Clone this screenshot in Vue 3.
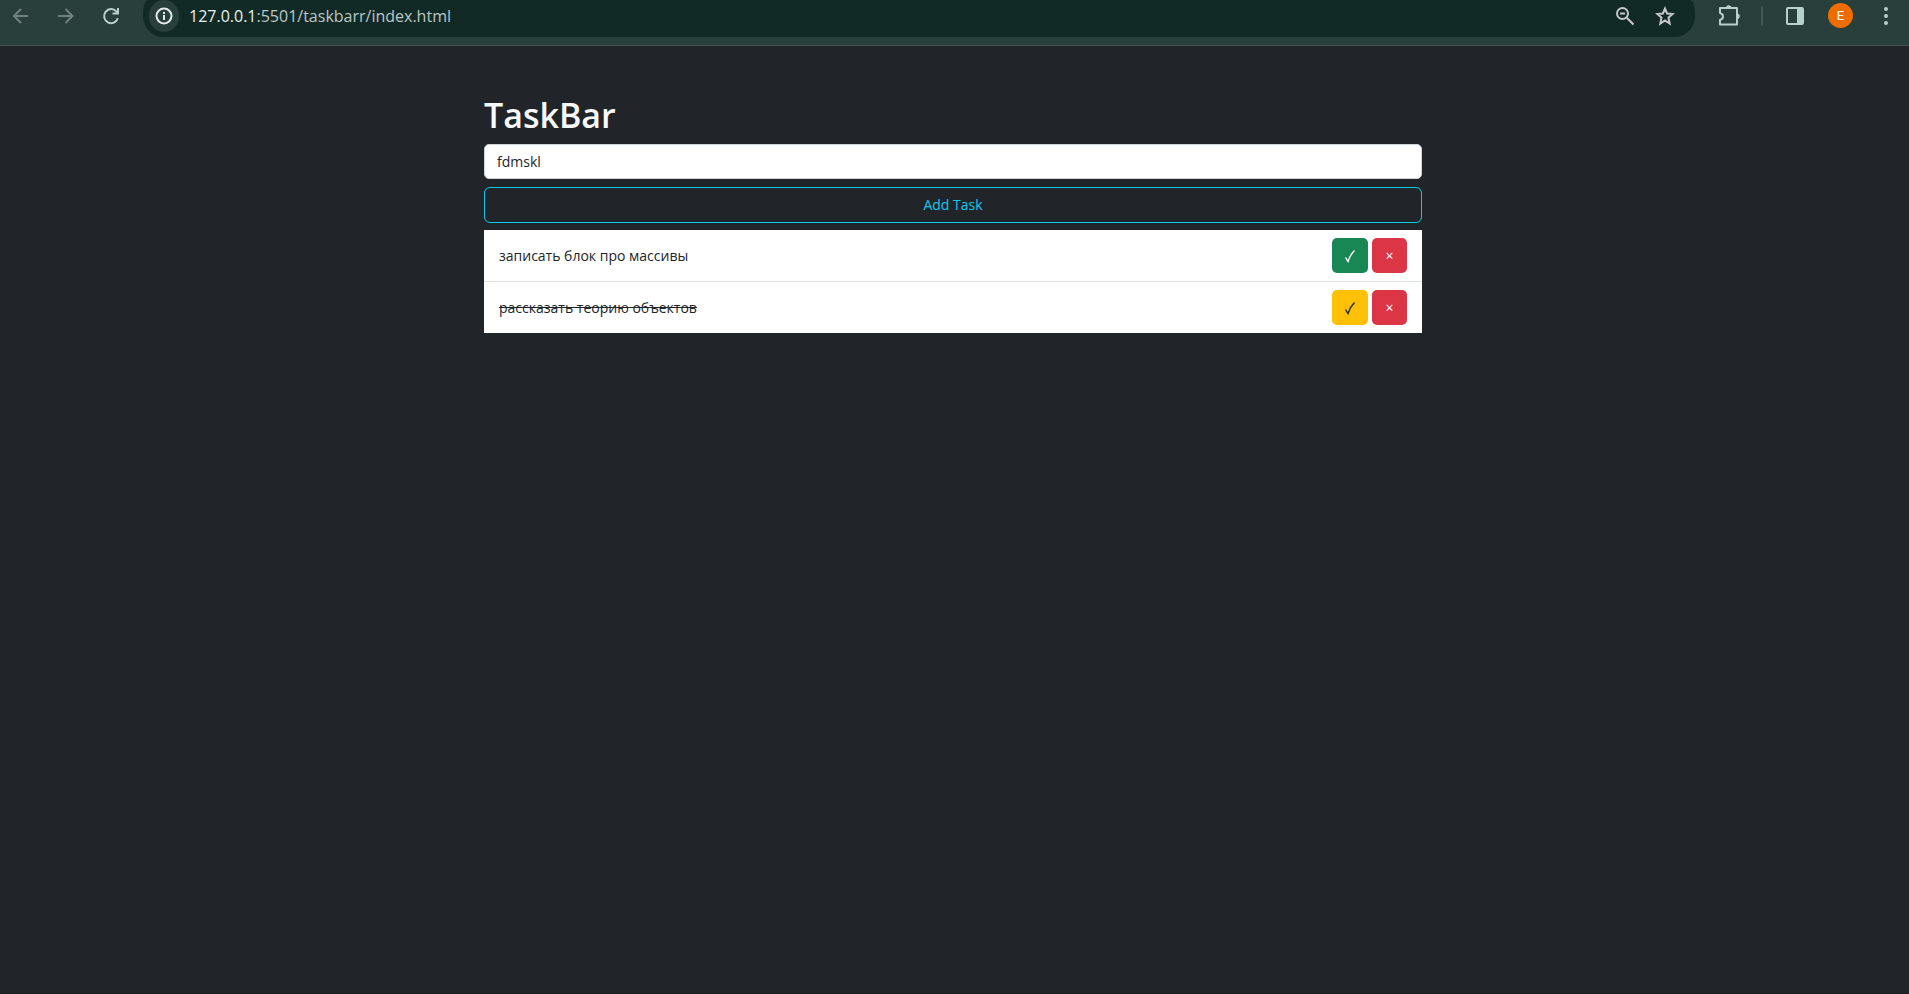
<script setup>
import { ref } from 'vue'

const draft = ref('fdmskl')
const tasks = ref([
  { id: 1, title: 'записать блок про массивы', done: false },
  { id: 2, title: 'рассказать теорию объектов', done: true }
])
let nextId = 3

function addTask() {
  const title = draft.value.trim()
  if (!title) return
  tasks.value.push({ id: nextId++, title, done: false })
  draft.value = ''
}

function removeTask(id) {
  tasks.value = tasks.value.filter((task) => task.id !== id)
}
</script>

<template>
  <div class="window">
    <header class="toolbar">
      <button class="tool dim" type="button" aria-label="Back">
        <svg width="20" height="20" viewBox="0 0 20 20"><path d="M17 10H3.500M10 3L3 10L10 17" /></svg>
      </button>
      <button class="tool dim" type="button" aria-label="Forward">
        <svg width="20" height="20" viewBox="0 0 20 20"><path d="M2 10H16M9.500 3L16.500 10L9.500 17" /></svg>
      </button>
      <button class="tool reload" type="button" aria-label="Reload">
        <svg width="20" height="20" viewBox="0 0 20 20"><path d="M16.800 12.200A7 7 0 1 1 15.300 5.400L17 7.200M17 2V7.500H11.500" /></svg>
      </button>
      <div class="omnibox">
        <button class="site-info" type="button" aria-label="Site information">
          <svg width="18" height="18" viewBox="0 0 18 18">
            <circle cx="9" cy="9" r="7.500" />
            <path d="M9 8V13M9 5V7" />
          </svg>
        </button>
        <div class="address">
          <span class="host">127.0.0.1</span><span>:5501/taskbarr/index.html</span>
        </div>
        <button class="tool light" type="button" aria-label="Zoom">
          <svg width="20" height="20" viewBox="0 0 20 20">
            <circle cx="7.500" cy="7.500" r="5.500" />
            <path d="M11.800 11.800L18.500 18.500M5 7.500H10" />
          </svg>
        </button>
        <button class="tool light" type="button" aria-label="Bookmark">
          <svg width="20" height="20" viewBox="0 0 20 20">
            <path d="M10 2.600L12.100 7.500L17.600 8L13.500 11.600L14.700 17.500L10 14.400L5.300 17.500L6.500 11.600L2.400 8L7.900 7.500Z" />
          </svg>
        </button>
      </div>
      <button class="tool extensions" type="button" aria-label="Extensions">
        <svg width="24" height="24" viewBox="0 0 24 24">
          <path stroke-linejoin="round" d="M3 4H20V20.500H3V16Q6 15 6 12.500T3 9Z" />
          <path class="solid" d="M9 4A2.700 2.700 0 0 1 14.400 4ZM20 9.500A2.700 2.700 0 0 1 20 15Z" />
        </svg>
      </button>
      <span class="divider"></span>
      <button class="tool panel" type="button" aria-label="Side panel">
        <svg width="20" height="20" viewBox="0 0 20 20">
          <rect x="2" y="2" width="16" height="16" rx="1" />
          <path class="solid" d="M12 2H18V18H12Z" />
        </svg>
      </button>
      <button class="avatar" type="button">E</button>
      <button class="tool more" type="button" aria-label="Menu">
        <svg width="20" height="20" viewBox="0 0 20 20">
          <circle class="dot" cx="10" cy="3" r="2" />
          <circle class="dot" cx="10" cy="10" r="2" />
          <circle class="dot" cx="10" cy="17" r="2" />
        </svg>
      </button>
    </header>

    <div class="viewport">
      <main class="page">
        <h1>TaskBar</h1>
        <form @submit.prevent="addTask">
          <input v-model="draft" class="field" type="text" aria-label="Task" />
          <button class="add" type="submit">Add Task</button>
        </form>
        <ul class="tasks">
          <li v-for="task in tasks" :key="task.id">
            <span :class="{ done: task.done }">{{ task.title }}</span>
            <span class="actions">
              <button
                type="button"
                aria-label="Toggle"
                :class="['mark', task.done ? 'warning' : 'success']"
                @click="task.done = !task.done"
              >
                <svg width="12" height="14" viewBox="0 0 12 14"><path d="M1.500 8.500L4 12.500Q6 6 10.500 1.500" /></svg>
              </button>
              <button type="button" class="mark danger" @click="removeTask(task.id)">×</button>
            </span>
          </li>
        </ul>
      </main>
    </div>
    <div class="edge"></div>
  </div>
</template>

<style>
body {
  margin: 0;
  background: #212529;
}
</style>

<style scoped>
.window {
  display: flex;
  flex-direction: column;
  min-height: 100vh;
  font-family: "Segoe UI", "Open Sans", "Noto Sans", sans-serif;
  color: #212529;
}

button,
input {
  box-sizing: border-box;
  margin: 0;
  font-family: inherit;
}

button {
  padding: 0;
  border: 0;
  background: none;
  cursor: pointer;
}

svg {
  display: block;
  fill: none;
  stroke: currentColor;
  stroke-width: 2;
}

.solid,
.dot {
  fill: currentColor;
  stroke: none;
}

.toolbar {
  box-sizing: border-box;
  display: flex;
  align-items: flex-start;
  height: 46px;
  padding: 0 13px 0 11px;
  border-bottom: 1px solid #3f524e;
  background: #283f3b;
}

.tool {
  flex: none;
  display: grid;
  place-items: center;
  height: 32px;
  color: #b6d0cb;
}

.dim {
  margin-right: 25px;
  color: #6f827e;
}

.reload {
  margin-right: 22px;
}

.omnibox {
  flex: 1;
  display: flex;
  align-items: flex-start;
  box-sizing: border-box;
  height: 37px;
  padding: 0 20px 0 6px;
  border-radius: 5px 5px 20px 20px / 14px 14px 21px 21px;
  background: #122a26;
}

.site-info {
  display: grid;
  place-items: center;
  width: 30px;
  height: 32px;
  border-radius: 15px;
  background: #283f3b;
  color: #e3ebe9;
}

.address {
  flex: 1;
  padding-left: 10px;
  font-size: 16px;
  line-height: 33px;
  color: #bcc6c4;
}

.host {
  color: #e6f0ee;
}

.light {
  margin-left: 20px;
  color: #c7c7c7;
}

.extensions {
  margin-left: 22px;
}

.divider {
  width: 2px;
  height: 20px;
  margin: 6px 22px 0 20px;
  background: #3f5a55;
}

.avatar {
  width: 25px;
  height: 25px;
  margin: 3px 23px 0 23px;
  border-radius: 50%;
  background: #ef6c00;
  color: #ffffff;
  font-family: Roboto, sans-serif;
  font-size: 13px;
}

.viewport {
  flex: 1;
  padding: 48px 3px 0 0;
}

.page {
  width: 50%;
  max-width: 938px;
  margin: 0 auto;
}

h1 {
  margin: 0 0 7px;
  font-size: 34px;
  font-weight: 600;
  line-height: 43px;
  color: #f8f9fa;
}

.field {
  display: block;
  width: 100%;
  height: 35px;
  padding: 0 12px;
  border: 1px solid #ced4da;
  border-radius: 5px;
  background: #ffffff;
  font-size: 14px;
  color: #212529;
}

.add {
  display: block;
  width: 100%;
  height: 36px;
  margin: 8px 0 7px;
  padding-bottom: 2px;
  border: 1px solid #0dcaf0;
  border-radius: 6px;
  font-size: 14px;
  color: #0dcaf0;
}

.tasks {
  margin: 0;
  padding: 0;
  list-style: none;
  background: #ffffff;
}

.tasks li {
  display: flex;
  align-items: center;
  justify-content: space-between;
  padding: 8px 15px;
  font-size: 14px;
}

.tasks li + li {
  border-top: 1px solid #dee2e6;
}

.done {
  text-decoration: line-through;
}

.actions {
  display: flex;
  gap: 4px;
}

.mark {
  display: grid;
  place-items: center;
  width: 36px;
  height: 35px;
  border-radius: 5px;
  font-size: 14px;
  color: #ffffff;
}

.mark svg {
  stroke-width: 1.4;
}

.success {
  background: #198754;
}

.warning {
  background: #ffc107;
  color: #212529;
}

.danger {
  width: 35px;
  background: #dc3545;
}

.edge {
  height: 1px;
  background: #1b1b22;
}
</style>
